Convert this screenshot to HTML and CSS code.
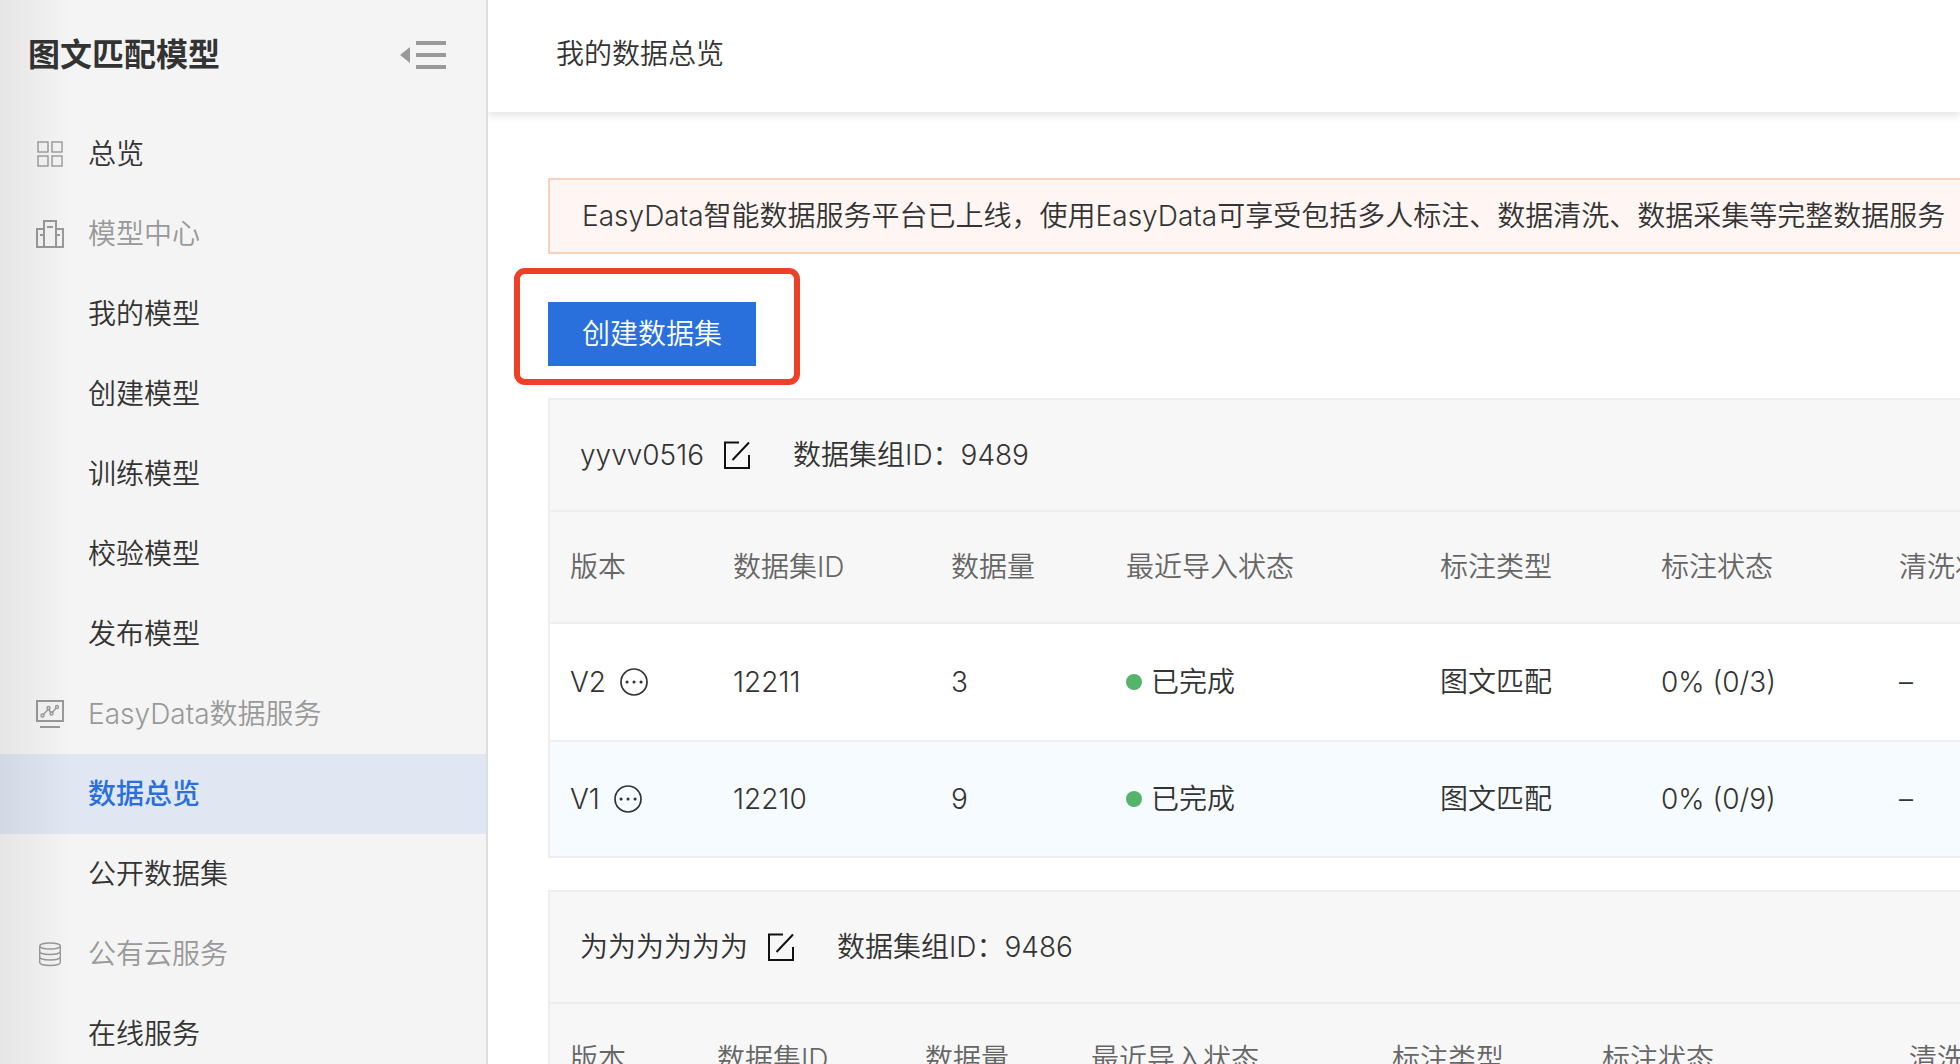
FILE: index.html
```html
<!DOCTYPE html>
<html lang="zh-CN">
  <head>
    <meta charset="UTF-8" />
    <meta name="viewport" content="width=device-width, initial-scale=1.0" />
    <title>我的数据总览</title>
    <link rel="stylesheet" href="styles.css">
  </head>
  <body>
    <aside class="sidebar">
      <div class="sidebar-header">
        <h1 class="sidebar-title">图文匹配模型</h1>
        <button type="button" class="collapse-btn" aria-label="收起菜单">
          <svg width="46" height="28" viewBox="0 0 46 28" fill="#999">
            <path d="M0 14L10 6V22Z" />
            <path d="M16 0H46V4H16ZM16 12H46V16H16ZM16 24H46V28H16Z" />
          </svg>
        </button>
      </div>
      <nav class="menu">
        <a href="#" class="menu-item">
          <svg class="menu-icon thin" viewBox="0 0 28 28">
            <rect x="2" y="2" width="10" height="10" />
            <rect x="16" y="2" width="10" height="10" />
            <rect x="2" y="16" width="10" height="10" />
            <rect x="16" y="16" width="10" height="10" />
          </svg>
          <span>总览</span>
        </a>
        <div class="menu-item menu-group">
          <svg class="menu-icon" viewBox="0 0 28 28">
            <path d="M8 27V1H20V27M8 9H1V27H27V9H20M11 7H17M4 15H8M20 15H24" />
          </svg>
          <span>模型中心</span>
        </div>
        <a href="#" class="menu-item menu-sub">我的模型</a>
        <a href="#" class="menu-item menu-sub">创建模型</a>
        <a href="#" class="menu-item menu-sub">训练模型</a>
        <a href="#" class="menu-item menu-sub">校验模型</a>
        <a href="#" class="menu-item menu-sub">发布模型</a>
        <div class="menu-item menu-group">
          <svg class="menu-icon" viewBox="0 0 28 28">
            <path d="M1 1H27V21H1ZM4 27H24" />
            <g class="thin">
              <path d="M7.5 14.5L12 9.5M12.8 9.5L15 12.5M16.5 12.5L20 8" />
              <circle cx="6.5" cy="15.5" r="1.5" />
              <circle cx="12.5" cy="8" r="1.5" />
              <circle cx="15.5" cy="13.5" r="1.5" />
              <circle cx="21" cy="7" r="1.5" />
            </g>
          </svg>
          <span>EasyData数据服务</span>
        </div>
        <a href="#" class="menu-item menu-sub active">数据总览</a>
        <a href="#" class="menu-item menu-sub">公开数据集</a>
        <div class="menu-item menu-group">
          <svg class="menu-icon thin" viewBox="0 0 28 28">
            <ellipse cx="14" cy="6" rx="10.3" ry="3" />
            <path d="M3.7 6V22.5C3.7 24.2 8.3 25.5 14 25.5S24.3 24.2 24.3 22.5V6" />
            <path d="M3.7 11.5C3.7 13.2 8.3 14.5 14 14.5S24.3 13.2 24.3 11.5M3.7 17C3.7 18.7 8.3 20 14 20S24.3 18.7 24.3 17" />
          </svg>
          <span>公有云服务</span>
        </div>
        <a href="#" class="menu-item menu-sub">在线服务</a>
      </nav>
    </aside>

    <main class="main">
      <header class="page-header">
        <h2 class="page-title">我的数据总览</h2>
      </header>
      <div class="content">
        <div class="notice">EasyData智能数据服务平台已上线，使用EasyData可享受包括多人标注、数据清洗、数据采集等完整数据服务</div>

        <div class="toolbar">
          <button type="button" class="create-btn">创建数据集</button>
        </div>

        <section class="dataset">
          <div class="dataset-header">
            <span>yyvv0516</span>
            <button type="button" class="edit-btn" aria-label="编辑名称">
              <svg width="26" height="28" viewBox="0 0 26 28">
                <path d="M15 1.5H1V27H25V14M25 1.5L8.5 19" />
              </svg>
            </button>
            <span>数据集组ID：9489</span>
          </div>
          <table class="dataset-table">
            <colgroup>
              <col class="w-163">
              <col class="w-218">
              <col class="w-175">
              <col class="w-314">
              <col class="w-221">
              <col class="w-238">
              <col>
            </colgroup>
            <thead>
              <tr>
                <th>版本</th>
                <th>数据集ID</th>
                <th>数据量</th>
                <th>最近导入状态</th>
                <th>标注类型</th>
                <th>标注状态</th>
                <th>清洗状态</th>
              </tr>
            </thead>
            <tbody>
              <tr>
                <td>
                  <div class="version">
                    <span>V2</span>
                    <button type="button" class="more-btn" aria-label="更多">
                      <svg width="28" height="28" viewBox="0 0 28 28">
                        <circle cx="14" cy="14" r="13" fill="none" stroke="#333" stroke-width="1.7" />
                        <path d="M7 14H7.1M14 14H14.1M21 14H21.1" stroke="#333" stroke-width="3" stroke-linecap="round" />
                      </svg>
                    </button>
                  </div>
                </td>
                <td>12211</td>
                <td>3</td>
                <td><span class="status">已完成</span></td>
                <td>图文匹配</td>
                <td>0% (0/3)</td>
                <td>–</td>
              </tr>
              <tr class="highlight">
                <td>
                  <div class="version">
                    <span>V1</span>
                    <button type="button" class="more-btn" aria-label="更多">
                      <svg width="28" height="28" viewBox="0 0 28 28">
                        <circle cx="14" cy="14" r="13" fill="none" stroke="#333" stroke-width="1.7" />
                        <path d="M7 14H7.1M14 14H14.1M21 14H21.1" stroke="#333" stroke-width="3" stroke-linecap="round" />
                      </svg>
                    </button>
                  </div>
                </td>
                <td>12210</td>
                <td>9</td>
                <td><span class="status">已完成</span></td>
                <td>图文匹配</td>
                <td>0% (0/9)</td>
                <td>–</td>
              </tr>
            </tbody>
          </table>
        </section>

        <section class="dataset">
          <div class="dataset-header">
            <span>为为为为为为</span>
            <button type="button" class="edit-btn" aria-label="编辑名称">
              <svg width="26" height="28" viewBox="0 0 26 28">
                <path d="M15 1.5H1V27H25V14M25 1.5L8.5 19" />
              </svg>
            </button>
            <span>数据集组ID：9486</span>
          </div>
          <table class="dataset-table">
            <colgroup>
              <col class="w-147">
              <col class="w-208">
              <col class="w-166">
              <col class="w-301">
              <col class="w-210">
              <col class="w-307">
              <col>
            </colgroup>
            <thead>
              <tr>
                <th>版本</th>
                <th>数据集ID</th>
                <th>数据量</th>
                <th>最近导入状态</th>
                <th>标注类型</th>
                <th>标注状态</th>
                <th>清洗状态</th>
              </tr>
            </thead>
          </table>
        </section>
      </div>
    </main>
  </body>
</html>
```
FILE: styles.css
```css
* {
  box-sizing: border-box;
}

body {
  margin: 0;
  height: 100vh;
  display: flex;
  overflow: hidden;
  background-color: #fff;
  color: #333;
  font-family: Inter, "Noto Sans CJK SC", sans-serif;
  font-size: 28px;
  font-weight: 350;
  line-height: 40px;
}

button {
  padding: 0;
  border: none;
  background: none;
  font: inherit;
  cursor: pointer;
}

svg {
  display: block;
}

/* Sidebar */
.sidebar {
  position: relative;
  flex: 0 0 488px;
  background-color: #f4f4f4;
  border-right: 2px solid #dedede;
}

.sidebar::before {
  content: "";
  position: absolute;
  top: 0;
  bottom: 0;
  left: 0;
  width: 72px;
  background: linear-gradient(to right, rgba(0, 0, 0, 0.06), rgba(0, 0, 0, 0.04) 35%, rgba(0, 0, 0, 0));
  pointer-events: none;
  z-index: 1;
}

.sidebar-header {
  display: flex;
  justify-content: space-between;
  align-items: center;
  height: 114px;
  padding: 0 40px 5px 28px;
}

.sidebar-title {
  margin: 0;
  font-size: 32px;
  font-weight: 600;
}

.menu-item {
  display: flex;
  align-items: center;
  gap: 24px;
  height: 80px;
  padding-left: 36px;
  color: #333;
  text-decoration: none;
}

.menu-group {
  color: #999;
}

.menu-sub {
  padding-left: 88px;
}

.menu-item.active {
  background-color: #e0e6f2;
  color: #2970dc;
  font-weight: 500;
}

.menu-icon {
  width: 28px;
  height: 28px;
  fill: none;
  stroke: #999;
  stroke-width: 2;
}

.thin {
  stroke-width: 1.4;
}

/* Main area */
.main {
  flex: 1;
  min-width: 0;
  overflow: hidden;
}

.page-header {
  height: 112px;
  padding: 34px 68px;
  box-shadow: 0 4px 8px rgba(0, 0, 0, 0.1);
}

.page-title {
  margin: 0;
  font-size: 28px;
  font-weight: inherit;
}

/* wide tables run past the right edge of the window */
.content {
  min-width: 1720px;
  padding: 66px 60px 0;
}

.notice {
  padding: 16px 32px;
  border: 2px solid #f9d0ba;
  background-color: #fff6f3;
  white-space: nowrap;
}

.toolbar {
  display: flex;
  padding: 48px 0 32px;
}

.create-btn {
  position: relative;
  height: 64px;
  padding: 0 34px;
  background-color: #2970dc;
  color: #fff;
}

.create-btn::after {
  content: "";
  position: absolute;
  top: -34px;
  right: -44px;
  bottom: -19px;
  left: -34px;
  border: 6px solid #ed4027;
  border-radius: 11px;
}

.dataset {
  margin-bottom: 32px;
  border: 2px solid #eee;
}

.dataset-header {
  display: flex;
  align-items: center;
  height: 112px;
  padding-left: 30px;
  border-bottom: 2px solid #eee;
  background-color: #f7f7f7;
}

.edit-btn {
  margin: 0 43px 0 20px;
}

.edit-btn path {
  fill: none;
  stroke: #111;
  stroke-width: 2;
}

.dataset-table {
  width: 100%;
  table-layout: fixed;
  border-collapse: separate;
  border-spacing: 0;
}

.dataset-table th,
.dataset-table td {
  padding: 0 0 0 20px;
  text-align: left;
  font-weight: inherit;
  white-space: nowrap;
}

.dataset-table th {
  height: 112px;
  border-bottom: 2px solid #eee;
  background-color: #f7f7f7;
  color: #666;
}

.dataset-table td {
  height: 116px;
}

.dataset-table .highlight td {
  border-top: 2px solid #eee;
  background-color: #f6fbff;
}

.version {
  display: flex;
  align-items: center;
  gap: 14px;
}

.status {
  display: flex;
  align-items: center;
  gap: 9px;
}

.status::before {
  content: "";
  width: 16px;
  height: 16px;
  border-radius: 50%;
  background-color: #55b36a;
}

/* Column widths */
.w-163 { width: 163px; }
.w-218 { width: 218px; }
.w-175 { width: 175px; }
.w-314 { width: 314px; }
.w-221 { width: 221px; }
.w-238 { width: 238px; }
.w-147 { width: 147px; }
.w-208 { width: 208px; }
.w-166 { width: 166px; }
.w-301 { width: 301px; }
.w-210 { width: 210px; }
.w-307 { width: 307px; }
```
